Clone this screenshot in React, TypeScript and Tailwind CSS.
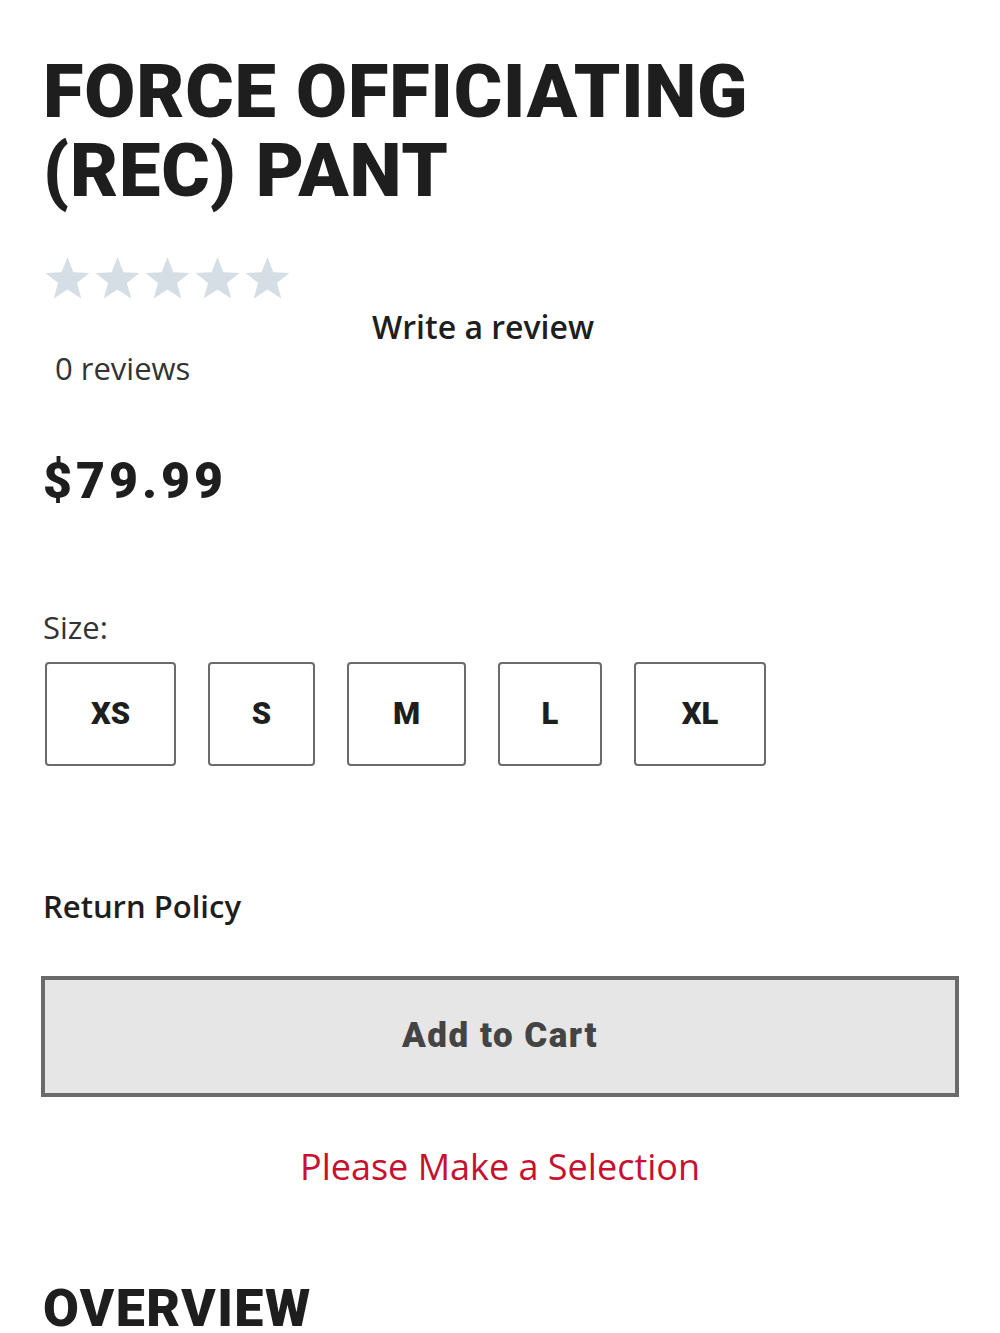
const sizes = [
  { label: "XS", w: "w-[131px]" },
  { label: "S", w: "w-[107px]" },
  { label: "M", w: "w-[119px]" },
  { label: "L", w: "w-[104px]" },
  { label: "XL", w: "w-[132px]" },
];

function Stars() {
  return (
    <div className="flex items-center gap-[1px]">
      {[0, 1, 2, 3, 4].map((i) => (
        <svg key={i} viewBox="0 0 24 24" className="h-[48px] w-[49px]" aria-hidden="true">
          <path
            d="M12 1.6l2.95 7.55 8.05.3-6.3 5.05 2.2 7.8L12 17.8l-6.9 4.5 2.2-7.8L1 9.45l8.05-.3z"
            fill="#d5dde5"
          />
        </svg>
      ))}
    </div>
  );
}

export default function App() {
  return (
    <div className="min-h-[1333px] bg-white px-[43px] pt-[52px] text-[#222] font-['Open_Sans',sans-serif]">
      <h1 className="font-['Roboto',sans-serif] text-[74px] font-black leading-[79px] tracking-[0.8px] text-[#1e1e1e]">
        FORCE OFFICIATING
        <br />
        (REC) PANT
      </h1>

      <div className="mt-[44px]">
        <Stars />
        <div className="pl-[329px] mt-[5px] text-[32px] font-semibold leading-[40px] text-[#1e1e1e]">
          Write a review
        </div>
        <div className="pl-[12px] mt-[1px] text-[31px] leading-[40px] text-[#333]">0 reviews</div>
      </div>

      <div className="mt-[63px] font-['Roboto',sans-serif] text-[50px] font-black leading-[60px] tracking-[4px] text-[#1e1e1e]">
        $79.99
      </div>

      <div className="mt-[96px] text-[31px] leading-[40px] text-[#333]">Size:</div>
      <div className="mt-[15px] flex gap-[32px] pl-[2px]">
        {sizes.map((s) => (
          <button
            key={s.label}
            className={`flex h-[104px] ${s.w} items-center justify-center rounded-[4px] border-2 border-[#6b6b6b] bg-white font-['Roboto',sans-serif] text-[31px] font-black text-[#1e1e1e]`}
          >
            {s.label}
          </button>
        ))}
      </div>

      <div className="mt-[120px] text-[31px] font-semibold leading-[40px] text-[#1e1e1e]">Return Policy</div>

      <button className="mt-[50px] -mx-[2px] flex h-[121px] w-[calc(100%+4px)] items-center justify-center border-4 border-[#6a6a6a] bg-[#e6e6e6] font-['Roboto',sans-serif] text-[35px] font-black tracking-[1.5px] text-[#444]">
        Add to Cart
      </button>

      <div className="mt-[47px] text-center text-[36px] leading-[46px] text-[#c8102e]">Please Make a Selection</div>

      <h2 className="mt-[89px] font-['Roboto',sans-serif] text-[52px] font-black leading-[60px] tracking-[1.5px] text-[#1e1e1e]">
        OVERVIEW
      </h2>
    </div>
  );
}
